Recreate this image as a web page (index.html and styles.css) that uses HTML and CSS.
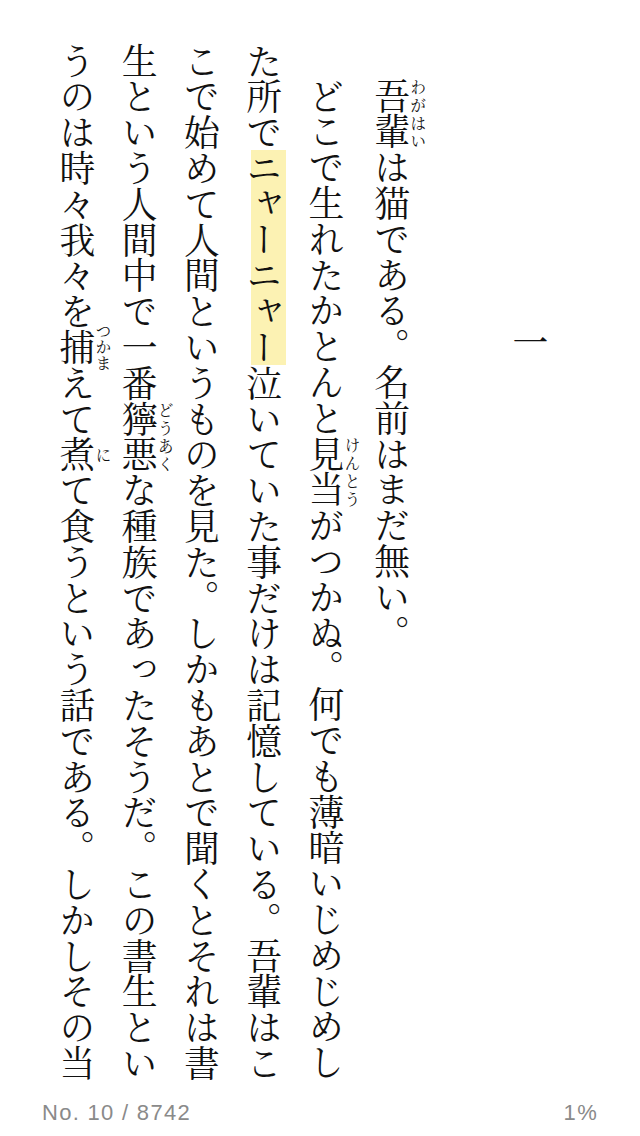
FILE: index.html
```html
<!DOCTYPE html>
<html lang="ja">

<head>
  <meta charset="UTF-8">
  <meta name="viewport" content="width=device-width, initial-scale=1.0">
  <title>吾輩は猫である</title>
  <link rel="stylesheet" href="styles.css">
</head>

<body>
  <div class="page">
    <!-- Vertical book text -->
    <div class="book">
      <h2 class="chapter">一</h2>
      <p><ruby>吾輩<rt>わがはい</rt></ruby>は猫である。名前はまだ無い。</p>
      <p>どこで生れたかとんと<ruby>見当<rt>けんとう</rt></ruby>がつかぬ。何でも薄暗いじめじめした所で<span class="hl">ニャーニャー</span>泣いていた事だけは記憶している。吾輩はここで始めて人間というものを見た。しかもあとで聞くとそれは書生という人間中で一番<ruby>獰悪<rt>どうあく</rt></ruby>な種族であったそうだ。この書生というのは時々我々を<ruby>捕<rt>つかま</rt></ruby>えて<ruby>煮<rt>に</rt></ruby>て食うという話である。しかしその当</p>
    </div>

    <div class="status">
      <span class="location">No. 10 / 8742</span>
      <span class="percent">1%</span>
    </div>
  </div>
</body>

</html>
```

FILE: styles.css
```css
body {
  margin: 0;
  padding: 0;
  background-color: #fff;
  color: #111;
}

.page {
  width: 640px;
  height: 1136px;
  display: flex;
  flex-direction: column;
  justify-content: space-between;
  overflow: hidden;
}

.book {
  writing-mode: vertical-rl;
  height: calc(29em + 2px);
  padding: 42.5px 79px 0 0;
  font-family: "Noto Serif CJK JP", "Noto Sans CJK JP", serif;
  font-size: 35.8px;
  line-height: 62.25px;
}

.chapter {
  margin: 0;
  margin-block-end: 72.6px;
  font-size: 1em;
  font-weight: normal;
  text-indent: 7.85em;
}

.book p {
  margin: 0;
  text-indent: 1em;
}

rt {
  font-size: 16px;
  line-height: 1;
}

/* highlight only as wide as one character */
.hl {
  background: linear-gradient(#fcf2b3, #fcf2b3) no-repeat;
  background-size: 35px 100%;
  background-position: right 4px top;
}

.status {
  height: 36px;
  line-height: 26px;
  padding: 0 42px 10px 42px;
  box-sizing: border-box;
  display: flex;
  justify-content: space-between;
  font-family: "Liberation Sans", Arial, sans-serif;
  font-size: 22px;
  letter-spacing: 1.3px;
  color: #8a8a8a;
}
```
